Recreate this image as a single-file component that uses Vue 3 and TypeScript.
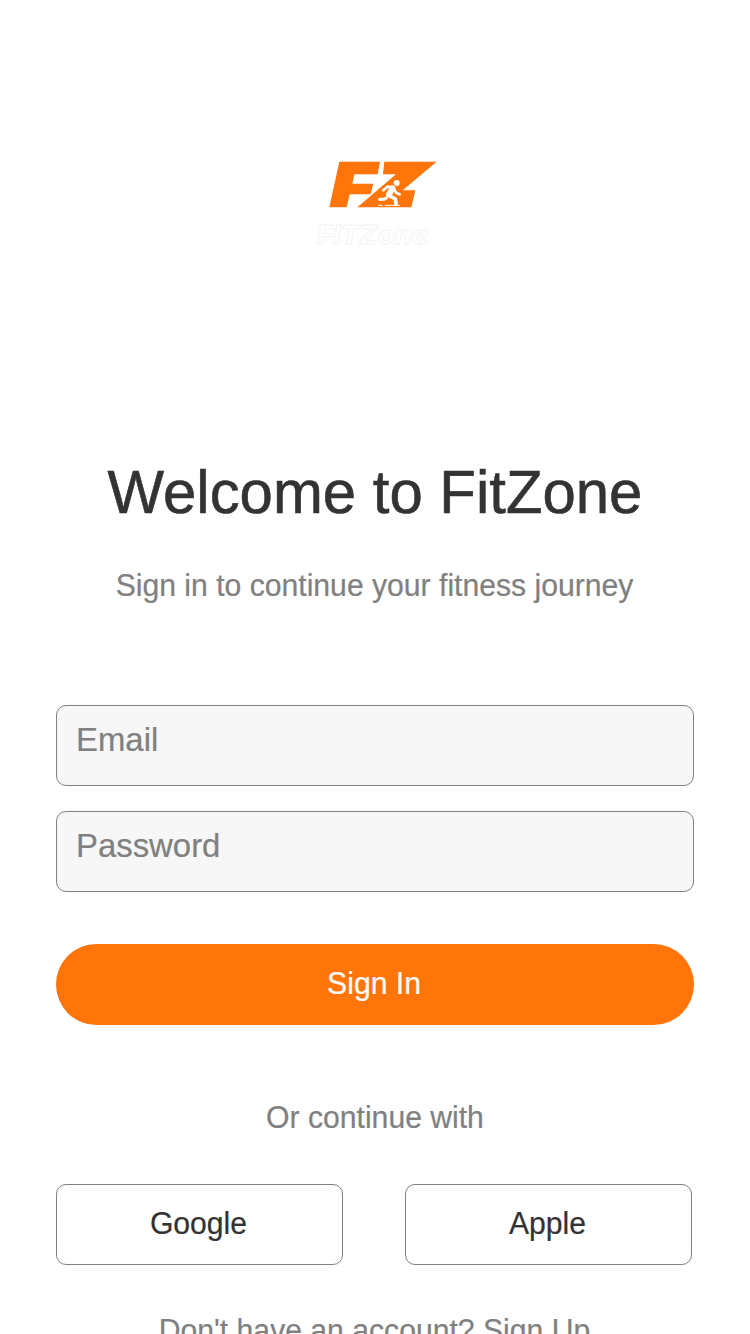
<script setup lang="ts">
import { ref } from 'vue'

interface Field {
  id: string
  label: string
}

const fields = ref<Field[]>([
  { id: 'email', label: 'Email' },
  { id: 'password', label: 'Password' },
])
const providers = ref<string[]>(['Google', 'Apple'])
</script>

<template>
  <main class="screen">
    <svg class="logo" viewBox="0 0 420 315" role="img" aria-label="FitZone">
      <g fill="#ff750a">
        <path d="M88 35H210L203 73H133L127 101H190L182 133H119L110 172H58Z" />
        <path d="M223 35H380L278 121H316L304 172H142L258 73H219Z" />
      </g>
      <g fill="none" stroke="#fff" stroke-linecap="round" stroke-linejoin="round">
        <circle cx="260" cy="99" r="9" fill="#fff" stroke="none" />
        <path d="M220 121L232 110L246 111" stroke-width="8" />
        <path d="M247 115L237 134" stroke-width="18" />
        <path d="M252 117L259 129L269 133" stroke-width="8" />
        <path d="M238 137L256 147L258 163" stroke-width="11" />
        <path d="M229 144L223 148L209 148" stroke-width="9" />
        <path d="M205 166H216M226 166H268" stroke-width="3" />
      </g>
      <text class="wordmark" x="21" y="282" textLength="333" lengthAdjust="spacingAndGlyphs">FITZone</text>
    </svg>

    <h1 class="title"><span class="type">Welcome to FitZone</span></h1>
    <p class="subtitle"><span class="type">Sign in to continue your fitness journey</span></p>

    <form class="form" @submit.prevent>
      <label v-for="field in fields" :key="field.id" class="field">
        <span class="type">{{ field.label }}</span>
      </label>
      <button class="submit" type="submit"><span class="type">Sign In</span></button>
    </form>

    <p class="divider"><span class="type">Or continue with</span></p>

    <div class="providers">
      <button v-for="name in providers" :key="name" class="provider" type="button">
        <span class="type">{{ name }}</span>
      </button>
    </div>

    <p class="signup"><span class="type">Don't have an account? Sign Up</span></p>
  </main>
</template>

<style>
body {
  margin: 0;
  background: #fff;
}
</style>

<style scoped>
.screen {
  box-sizing: border-box;
  display: flex;
  flex-direction: column;
  width: 750px;
  height: 1334px;
  padding: 150px 56px 0;
  overflow: hidden;
  background: #fff;
  color: #808080;
  font: 30.15px/40px "Liberation Sans", Arial, sans-serif;
}

.screen > * {
  flex: none;
}

.type {
  display: inline-block;
  transform: scaleY(1.03);
  transform-origin: 50% 78%;
  white-space: nowrap;
  -webkit-text-stroke: 0.2px currentColor;
}

.logo {
  display: block;
  width: 140px;
  height: 105px;
  margin-left: 254px;
}

.wordmark {
  fill: #fff;
  stroke: #f3f3f3;
  stroke-width: 2.5px;
  font: italic 800 76px Inter, sans-serif;
}

.title {
  margin: 198px 0 0;
  color: #333;
  font-size: 59.9px;
  font-weight: 400;
  line-height: 80px;
  text-align: center;
}

.title .type {
  -webkit-text-stroke-width: 0.6px;
}

.subtitle {
  margin: 33px -1px 0 -2px;
  text-align: center;
}

.form {
  display: flex;
  flex-direction: column;
  margin-top: 99px;
}

.field {
  box-sizing: border-box;
  height: 81px;
  margin-bottom: 25px;
  padding: 14px 19px;
  border: 1px solid #808080;
  border-radius: 10px;
  background: #f7f7f7;
  font-size: 32.9px;
}

.submit,
.provider {
  height: 81px;
  padding: 0 2px 1px 0;
  font: inherit;
}

.submit {
  margin-top: 27px;
  border: 0;
  border-radius: 41px;
  background: #ff750a;
  color: #fff;
}

.divider {
  margin: 73px 0 0;
  text-align: center;
}

.providers {
  display: grid;
  grid-template-columns: 287px 287px;
  column-gap: 62px;
  margin-top: 46px;
}

.provider {
  border: 1px solid #808080;
  border-radius: 10px;
  background: #fff;
  color: #333;
}

.signup {
  margin: 46px 1px 0 0;
  text-align: center;
}
</style>
